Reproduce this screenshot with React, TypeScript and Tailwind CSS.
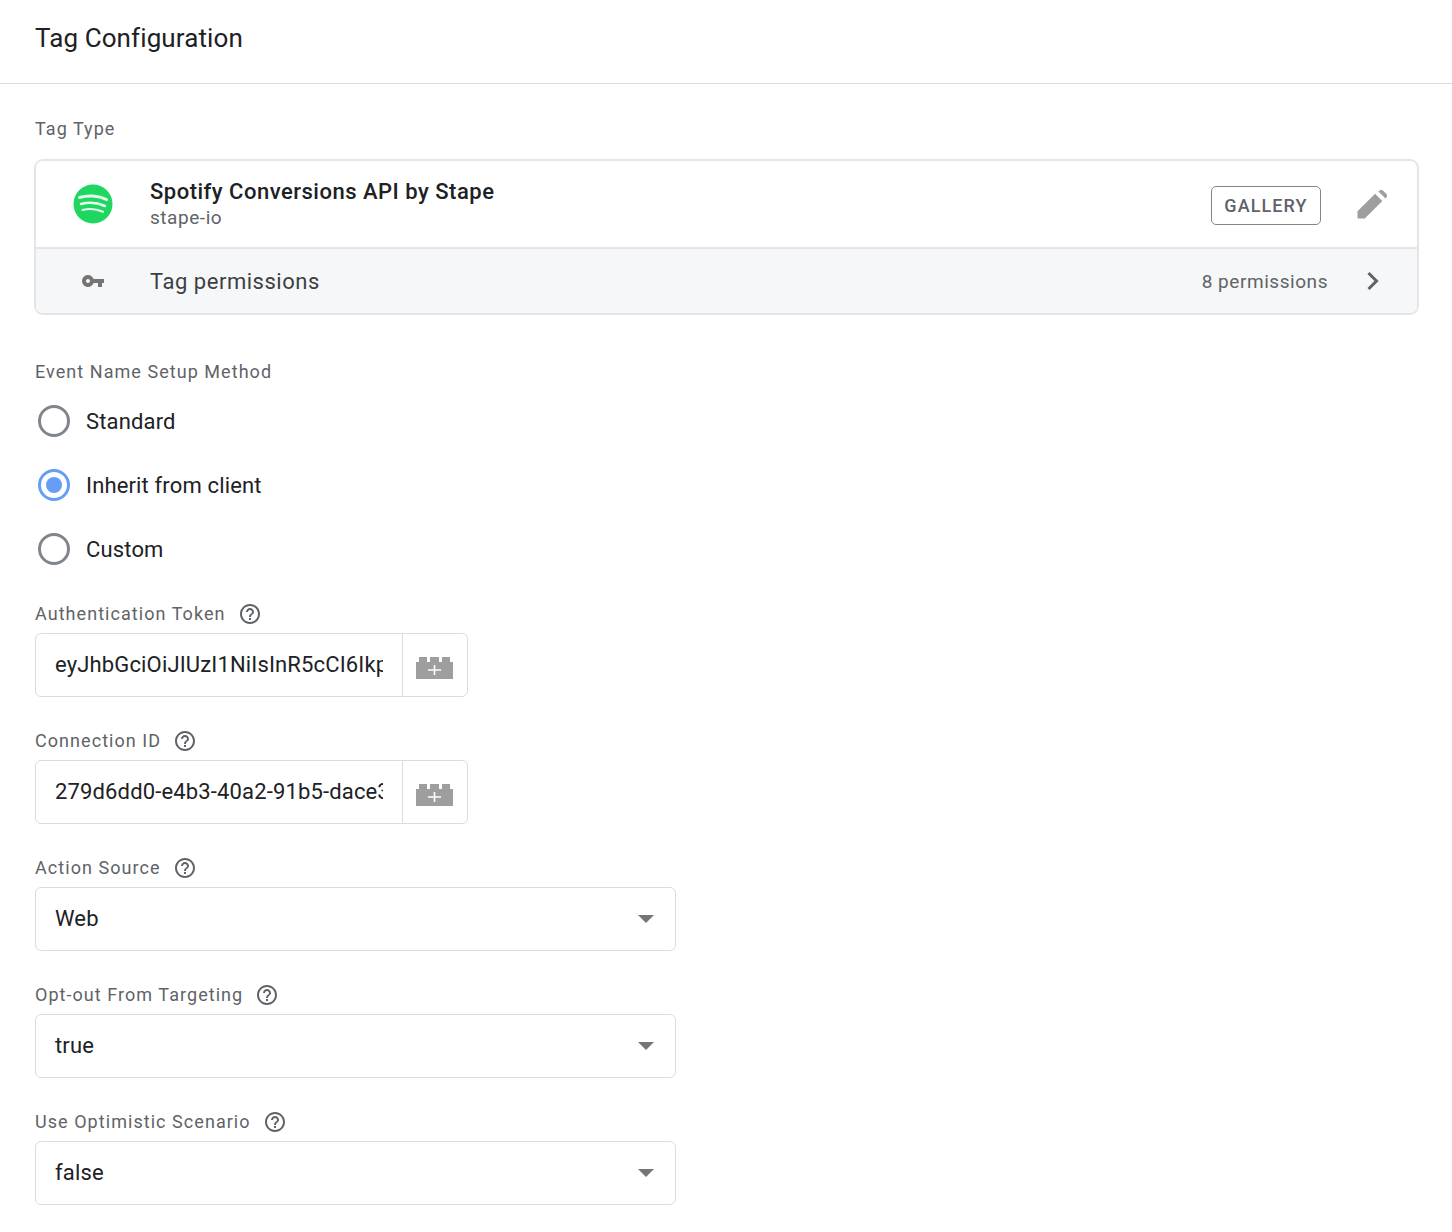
import type { ReactNode } from 'react';

const labelClass = "text-[18px] leading-[24px] tracking-[1.05px] text-[#5f6368]";

function HelpIcon() {
  return (
    <svg width="24" height="24" viewBox="0 0 24 24" fill="#5f6368" className="shrink-0">
      <path d="M11 18h2v-2h-2v2zm1-16C6.48 2 2 6.48 2 12s4.48 10 10 10 10-4.48 10-10S17.52 2 12 2zm0 18c-4.41 0-8-3.59-8-8s3.59-8 8-8 8 3.59 8 8-3.59 8-8 8zm0-14c-2.21 0-4 1.79-4 4h2c0-1.1.9-2 2-2s2 .9 2 2c0 2-3 1.75-3 5h2c0-2.25 3-2.5 3-5 0-2.21-1.79-4-4-4z" />
    </svg>
  );
}

function VariableIcon() {
  return (
    <svg width="37" height="22" viewBox="0 0 37 22" fill="#9e9e9e">
      <path d="M0 5h3V0h8v5h3V0h9v5h3V0h8v5h3v17H0z" />
      <path d="M17.7 8h1.6v4.200h5.700v1.600h-5.700V18h-1.600v-4.200H12v-1.600h5.700z" fill="#fff" />
    </svg>
  );
}

function Radio({ label, checked }: { label: string; checked?: boolean }) {
  return (
    <div className="flex items-center h-[64px]">
      <span className={`w-[32px] h-[32px] rounded-full border-[3px] flex items-center justify-center shrink-0 ${checked ? "border-[#669df6]" : "border-[#80868b]"}`}>
        {checked && <span className="w-[16px] h-[16px] rounded-full bg-[#669df6]" />}
      </span>
      <span className="ml-[16px] pt-[2px] text-[22px] leading-[28px] tracking-[0.15px] text-[#202124]">{label}</span>
    </div>
  );
}

function Field({ label, children }: { label: string; children: ReactNode }) {
  return (
    <div className="h-[127px] pt-[10px]">
      <div className="flex items-center h-[24px] mb-[7px] gap-[12px]">
        <span className={labelClass}>{label}</span>
        <HelpIcon />
      </div>
      {children}
    </div>
  );
}

function VariableInput({ value }: { value: string }) {
  return (
    <div className="flex w-[433px] h-[64px] border border-[#dadce0] rounded-[6px]">
      <div className="w-[367px] pl-[19px] pr-[19px] flex items-center border-r border-[#dadce0]">
        <span className="block overflow-hidden whitespace-nowrap text-[22px] leading-[28px] tracking-[0.15px] text-[#202124]">{value}</span>
      </div>
      <div className="flex-1 flex items-center justify-center pt-[6px] pr-[2px]">
        <VariableIcon />
      </div>
    </div>
  );
}

function SelectBox({ value }: { value: string }) {
  return (
    <div className="flex items-center justify-between w-[641px] h-[64px] pl-[19px] pr-[21px] border border-[#dadce0] rounded-[6px]">
      <span className="text-[22px] leading-[28px] tracking-[0.15px] text-[#202124]">{value}</span>
      <svg width="16" height="8" viewBox="0 0 16 8" fill="#757575">
        <path d="M0 0h16L8 8z" />
      </svg>
    </div>
  );
}

export default function App() {
  return (
    <div className="w-[1452px] h-[1232px] bg-white overflow-hidden font-['Roboto',sans-serif]">
      <div className="h-[84px] border-b border-[#dadce0] pl-[35px] pt-[21px]">
        <h1 className="text-[26px] leading-[34px] font-normal tracking-[0.1px] text-[#202124]">Tag Configuration</h1>
      </div>

      <div className="pl-[35px] pr-[34px]">
        <div className={`${labelClass} pt-[33px]`}>Tag Type</div>

        <div className="mt-[18px] -ml-[1px] w-[1385px] h-[156px] rounded-[9px] border-2 border-[#e3e5e8] overflow-hidden">
          <div className="flex items-center h-[86px] pt-[2px] bg-white">
            <div className="w-[113px] flex justify-center -mt-[2px]">
              <svg width="40" height="40" viewBox="0 0 40 40">
                <circle cx="20" cy="20" r="19.5" fill="#1ed760" />
                <path d="M6.500 13.500c8-2.500 19-2 27 2" stroke="#fff" strokeWidth="3" strokeLinecap="round" fill="none" opacity="0.9" />
                <path d="M8 20c7-2 16.500-1.500 24 2" stroke="#fff" strokeWidth="2.500" strokeLinecap="round" fill="none" opacity="0.9" />
                <path d="M9.500 26c6-1.500 14-1.200 20.500 1.800" stroke="#fff" strokeWidth="2.100" strokeLinecap="round" fill="none" opacity="0.9" />
              </svg>
            </div>
            <div className="flex-1 min-w-0 pl-[1px] -mt-[2px]">
              <div className="text-[22px] leading-[28px] font-medium tracking-[0.5px] text-[#202124]">Spotify Conversions API by Stape</div>
              <div className="text-[19px] leading-[24px] tracking-[0.55px] text-[#5f6368]">stape-io</div>
            </div>
            <div className="ml-[1px] w-[110px] h-[39px] flex items-center justify-center border border-[#80868b] rounded-[5px] text-[18px] font-medium tracking-[1.1px] text-[#5f6368]">GALLERY</div>
            <div className="w-[96px] flex justify-center pl-[6px]">
              <svg width="30" height="30" viewBox="0 0 24 24" fill="#9e9e9e">
                <path d="M0 24v-6L14.500 3.500l6 6L6 24z" transform="translate(0.4 -0.4) scale(0.97)" />
                <path d="M17 1l2.200-1a1 1 0 0 1 1.300.1l3.400 3.400a1 1 0 0 1 .1 1.300L23 7z" />
              </svg>
            </div>
          </div>
          <div className="flex items-center h-[66px] bg-[#f6f7f9] border-t-2 border-[#e3e5e8]">
            <div className="w-[113px] flex justify-center">
              <svg width="24" height="24" viewBox="0 0 24 24" fill="#757575">
                <path d="M12.650 10C11.830 7.670 9.610 6 7 6c-3.310 0-6 2.690-6 6s2.690 6 6 6c2.610 0 4.830-1.670 5.650-4H17v4h4v-4h2v-4H12.650zM7 14c-1.100 0-2-.9-2-2s.9-2 2-2 2 .9 2 2-.9 2-2 2z" />
              </svg>
            </div>
            <div className="flex-1 pl-[1px] pt-[2px] text-[22px] leading-[28px] tracking-[0.53px] text-[#3c4043]">Tag permissions</div>
            <div className="pt-[2px] text-[19px] leading-[24px] tracking-[0.55px] text-[#5f6368]">8 permissions</div>
            <div className="w-[89px] flex justify-center">
              <svg width="14" height="20" viewBox="0 0 14 20" fill="none" stroke="#5f6368" strokeWidth="3">
                <path d="M2.500 2l8 8-8 8" />
              </svg>
            </div>
          </div>
        </div>

        <div className={`${labelClass} mt-[45px]`}>Event Name Setup Method</div>
        <div className="mt-[5px] ml-[3px]">
          <Radio label="Standard" />
          <Radio label="Inherit from client" checked />
          <Radio label="Custom" />
        </div>

        <div className="mt-[11px]">
          <Field label="Authentication Token">
            <VariableInput value="eyJhbGciOiJIUzI1NiIsInR5cCI6IkpXVCJ9" />
          </Field>
          <Field label="Connection ID">
            <VariableInput value="279d6dd0-e4b3-40a2-91b5-dace3f1a7" />
          </Field>
          <Field label="Action Source">
            <SelectBox value="Web" />
          </Field>
          <Field label="Opt-out From Targeting">
            <SelectBox value="true" />
          </Field>
          <Field label="Use Optimistic Scenario">
            <SelectBox value="false" />
          </Field>
        </div>
      </div>
    </div>
  );
}
